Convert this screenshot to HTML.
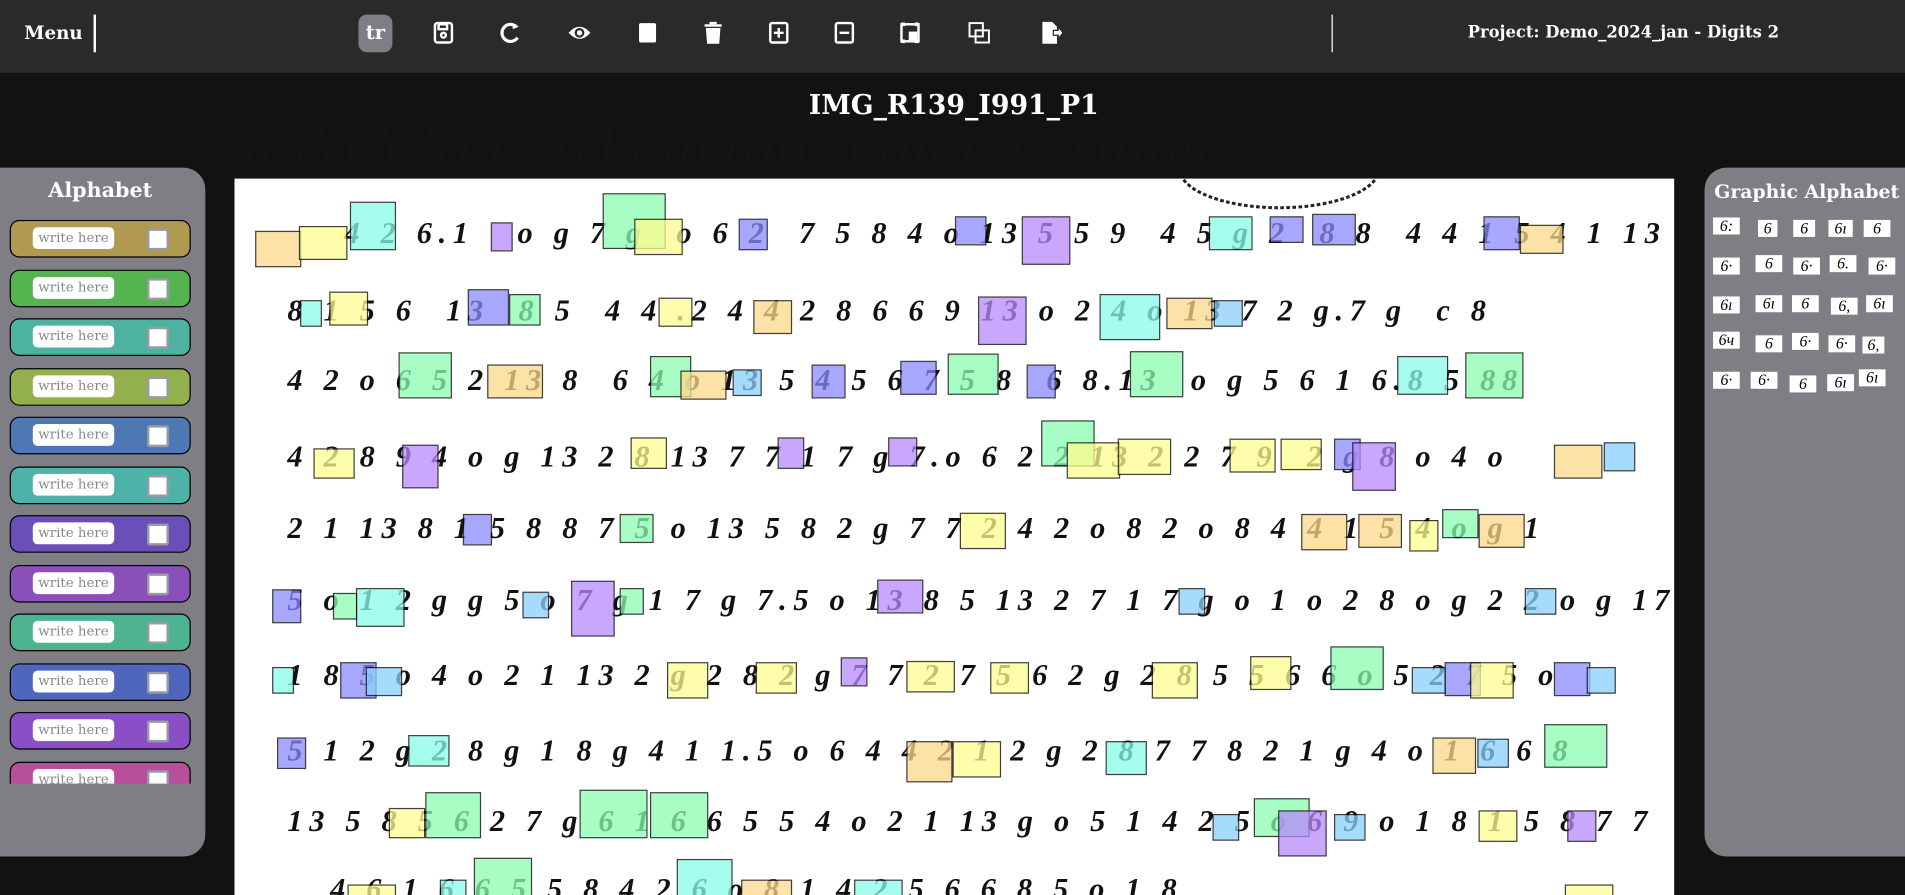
<!DOCTYPE html>
<html><head><meta charset="utf-8"><style>
html,body{margin:0;padding:0;width:1905px;height:891px;overflow:hidden;background:#121212;}
#w{position:absolute;left:0;top:0;width:1568px;height:734px;transform:scale(1.21492);transform-origin:0 0;font-family:"DejaVu Serif","Liberation Serif",serif;}
.top{position:absolute;left:0;top:0;width:1568px;height:60px;background:#2a2a2a;}
.t{position:absolute;color:#fff;font-weight:bold;white-space:nowrap;}
.ic{position:absolute;top:17px;width:20px;height:20px;}
.lp{position:absolute;left:0;top:138px;width:169px;height:567px;background:#7f7e84;border-radius:0 18px 18px 0;}
.rp{position:absolute;left:1403px;top:138px;width:165px;height:567px;background:#7f7e84;border-radius:18px 0 0 18px;overflow:hidden;}
.list{position:absolute;left:0;top:43px;width:169px;height:464px;overflow:hidden;}
.it{position:absolute;left:8px;width:147px;height:29px;border:1.5px solid #000;border-radius:8px;}
.it .in{position:absolute;left:18px;top:5px;width:67px;height:18px;background:#fff;border-radius:4px;color:#888;font-size:11px;line-height:18px;text-align:center;}
.it .cb{position:absolute;left:112px;top:6px;width:14px;height:14px;background:#fff;border:2px solid #9a9aa6;border-radius:2px;}
.img{position:absolute;left:193px;top:147px;width:1185px;height:590px;background:#fff;overflow:hidden;}
.b{position:absolute;border:1.5px solid #000;box-sizing:border-box;opacity:.75;}
.o{background:#fdd98a}.y{background:#fdfd90}.c{background:#8afde8}.p{background:#b88afd}.u{background:#8a8afd}.g{background:#8afdb0}.l{background:#8ad0fd}
.hw{position:absolute;left:20px;font-family:"Liberation Serif",serif;font-style:italic;font-weight:bold;font-size:25px;color:#111;white-space:pre;letter-spacing:5.5px;}
.th{position:absolute;width:22px;height:14px;background:#fff;font-family:"Liberation Serif",serif;font-style:italic;font-size:13px;line-height:14px;color:#000;text-align:center;}
</style></head><body><div id="w">
<div class="top">
<div class="t" style="left:20px;top:18px;font-size:15px;">Menu</div>
<div style="position:absolute;left:77px;top:12px;width:2px;height:31px;background:#fff"></div>
<div style="position:absolute;left:295px;top:12px;width:28px;height:31px;background:#7f7e84;border-radius:7px;color:#fff;font-weight:bold;font-size:16px;text-align:center;line-height:30px">tr</div>
<svg class="ic" style="left:355px" viewBox="0 0 20 20" fill="none" stroke="#fff" stroke-width="2"><rect x="3" y="2" width="14" height="16" rx="2"/><rect x="6" y="3" width="7" height="4"/><circle cx="10" cy="12" r="2"/></svg>
<svg class="ic" style="left:410px" viewBox="0 0 20 20" fill="none" stroke="#fff" stroke-width="2.6"><path d="M15 5A7 7 0 1 0 16 14"/><path d="M12 2l5 3-5 2z" fill="#fff" stroke="none"/></svg>
<svg class="ic" style="left:467px" viewBox="0 0 20 20"><path d="M1 10Q10 0 19 10Q10 20 1 10z" fill="#fff"/><circle cx="10" cy="10" r="4" fill="#2a2a2a"/><circle cx="10" cy="10" r="2.2" fill="#fff"/></svg>
<svg class="ic" style="left:523px" viewBox="0 0 20 20"><rect x="3" y="2" width="14" height="16" rx="1.5" fill="#fff"/></svg>
<svg class="ic" style="left:577px" viewBox="0 0 20 20" fill="#fff"><rect x="3" y="3" width="14" height="2"/><rect x="7" y="1" width="6" height="2"/><path d="M4 6h12l-1 13H5z"/></svg>
<svg class="ic" style="left:631px" viewBox="0 0 20 20" fill="none" stroke="#fff" stroke-width="2"><rect x="3" y="2" width="14" height="16" rx="1.5"/><path d="M10 6v8M6 10h8"/></svg>
<svg class="ic" style="left:685px" viewBox="0 0 20 20" fill="none" stroke="#fff" stroke-width="2"><rect x="3" y="2" width="14" height="16" rx="1.5"/><path d="M6 10h8"/></svg>
<svg class="ic" style="left:739px" viewBox="0 0 20 20" fill="none" stroke="#fff" stroke-width="2"><rect x="3" y="3" width="14" height="14"/><rect x="10" y="10" width="5" height="5" fill="#fff"/><path d="M3 3h3M14 3h3M3 17h3M14 17h3" stroke-width="3"/></svg>
<svg class="ic" style="left:796px" viewBox="0 0 20 20" fill="none" stroke="#fff" stroke-width="1.6"><rect x="2" y="2" width="11" height="11"/><rect x="7" y="8" width="11" height="10"/></svg>
<svg class="ic" style="left:855px" viewBox="0 0 20 20" fill="#fff"><path d="M3 1h8l4 4v14H3z"/><path d="M12 8h4V5l4 5-4 5v-3h-4z" stroke="#2a2a2a" stroke-width="1"/></svg>
<div style="position:absolute;left:1096px;top:12px;width:1px;height:31px;background:#fff"></div>
<div class="t" style="left:1208px;top:19px;font-size:13.5px;">Project: Demo_2024_jan - Digits 2</div>
</div>
<div style="position:absolute;left:200px;top:90px;font-family:'Liberation Serif',serif;font-style:italic;font-size:50px;color:#141414;white-space:nowrap;letter-spacing:3px">nnVeVXbozirkenrio62vinetsvvraum</div>
<div class="t" style="left:0;width:1570px;text-align:center;top:74px;font-size:22px;">IMG_R139_I991_P1</div>

<div class="lp"><div class="t" style="left:0;width:165px;text-align:center;top:9px;font-size:17px">Alphabet</div>
<div class="list">
<div class="it" style="top:0;background:#b09a50"><div class="in">write here</div><div class="cb"></div></div>
<div class="it" style="top:40.5px;background:#56b450"><div class="in">write here</div><div class="cb"></div></div>
<div class="it" style="top:81px;background:#4db3a0"><div class="in">write here</div><div class="cb"></div></div>
<div class="it" style="top:121.5px;background:#93b04e"><div class="in">write here</div><div class="cb"></div></div>
<div class="it" style="top:162px;background:#4e78b4"><div class="in">write here</div><div class="cb"></div></div>
<div class="it" style="top:202.5px;background:#4db3a8"><div class="in">write here</div><div class="cb"></div></div>
<div class="it" style="top:243px;background:#6a4fb8"><div class="in">write here</div><div class="cb"></div></div>
<div class="it" style="top:283.5px;background:#8a4fb8"><div class="in">write here</div><div class="cb"></div></div>
<div class="it" style="top:324px;background:#4db390"><div class="in">write here</div><div class="cb"></div></div>
<div class="it" style="top:364.5px;background:#4e66bc"><div class="in">write here</div><div class="cb"></div></div>
<div class="it" style="top:405px;background:#8a4fc4"><div class="in">write here</div><div class="cb"></div></div>
<div class="it" style="top:445.5px;background:#b84f9a"><div class="in">write here</div><div class="cb"></div></div>
</div></div>

<div class="rp"><div class="t" style="left:8px;top:10px;font-size:15.5px">Graphic Alphabet</div>
<div class="th" style="left:7px;top:41px">6:</div><div class="th" style="left:44px;top:43px;width:16px">6</div><div class="th" style="left:73px;top:43px;width:18px">6</div><div class="th" style="left:102px;top:43px;width:20px">6ı</div><div class="th" style="left:131px;top:43px;width:22px">6</div>
<div class="th" style="left:7px;top:74px">6·</div><div class="th" style="left:42px;top:72px">6</div><div class="th" style="left:73px;top:74px">6·</div><div class="th" style="left:103px;top:72px">6.</div><div class="th" style="left:135px;top:74px">6·</div>
<div class="th" style="left:7px;top:106px">6ı</div><div class="th" style="left:42px;top:105px">6ı</div><div class="th" style="left:72px;top:105px">6</div><div class="th" style="left:104px;top:107px">6,</div><div class="th" style="left:133px;top:105px">6ı</div>
<div class="th" style="left:7px;top:135px">6ч</div><div class="th" style="left:42px;top:138px">6</div><div class="th" style="left:72px;top:136px">6·</div><div class="th" style="left:102px;top:138px">6·</div><div class="th" style="left:130px;top:139px;width:18px">6,</div>
<div class="th" style="left:7px;top:168px">6·</div><div class="th" style="left:38px;top:168px">6·</div><div class="th" style="left:70px;top:171px">6</div><div class="th" style="left:101px;top:170px">6ı</div><div class="th" style="left:127px;top:166px">6ı</div>
</div>

<div class="img">
<svg style="position:absolute;left:775px;top:-20px" width="170" height="50"><ellipse cx="85" cy="12" rx="82" ry="32" fill="none" stroke="#222" stroke-width="2.5" stroke-dasharray="3 2"/><text x="62" y="20" font-size="9" fill="#222" font-family="Liberation Sans">OL. VATICANVM</text></svg>
<div class="hw" style="top:32px">      4 2 6.1   o g 7 g  o 6 2  7 5 8 4 o 13 5 5 9  4 5 g 2  8 8  4 4 1 5 4 1 13 o</div>
<div class="hw" style="top:96px">  8 1 5 6  13  8 5  4 4 .2 4 4 2 8 6 6 9 13 o 2 4 o 13 7 2 g.7 g  c 8</div>
<div class="hw" style="top:153px">  4 2 o 6 5 2 13 8  6 4 o 13 5 4 5 6 7 5 8  6 8.13  o g 5 6 1 6.8 5 88</div>
<div class="hw" style="top:216px">  4 2 8 9 4 o g 13 2 8 13 7 7 1 7 g 7.o 6 2 2 13 2 2 7 9  2 g 8 o 4 o</div>
<div class="hw" style="top:275px">  2 1 13 8 1 5 8 8 7 5 o 13 5 8 2 g 7 7 2 4 2 o 8 2 o 8 4 4 1 5 4 o g 1</div>
<div class="hw" style="top:334px">  5 o 1 2 g g 5 o 7 g 1 7 g 7.5 o 13 8 5 13 2 7 1 7 g o 1 o 2 8 o g 2 2 o g 17</div>
<div class="hw" style="top:396px">  1 8 5 o 4 o 2 1 13 2 g 2 8 2 g 7 7 2 7 5 6 2 g 2 8 5 5 6 6 o 5 2 7 5 o</div>
<div class="hw" style="top:458px">  5 1 2 g 2 8 g 1 8 g 4 1 1.5 o 6 4 4 2 1 2 g 2 8 7 7 8 2 1 g 4 o 1 6 6 8</div>
<div class="hw" style="top:516px">  13 5 8 5 6 2 7 g 6 1 6 6 5 5 4 o 2 1 13 g o 5 1 4 2 5 o 6 9 o 1 8 1 5 8 7 7</div>
<div class="hw" style="top:572px">     4 6 1 6 6 5 5 8 4 2 6 o 8 1 4 2 5 6 6 8 5 o 1 8</div>
<div class="b o" style="left:17px;top:43px;width:38px;height:30px"></div>
<div class="b y" style="left:53px;top:39px;width:40px;height:28px"></div>
<div class="b c" style="left:95px;top:19px;width:38px;height:40px"></div>
<div class="b p" style="left:211px;top:36px;width:18px;height:24px"></div>
<div class="b g" style="left:303px;top:12px;width:52px;height:46px"></div>
<div class="b y" style="left:329px;top:33px;width:40px;height:30px"></div>
<div class="b u" style="left:415px;top:33px;width:24px;height:26px"></div>
<div class="b u" style="left:593px;top:31px;width:26px;height:24px"></div>
<div class="b p" style="left:648px;top:31px;width:40px;height:40px"></div>
<div class="b c" style="left:802px;top:31px;width:36px;height:28px"></div>
<div class="b u" style="left:852px;top:31px;width:28px;height:22px"></div>
<div class="b u" style="left:887px;top:29px;width:36px;height:26px"></div>
<div class="b u" style="left:1028px;top:31px;width:30px;height:28px"></div>
<div class="b o" style="left:1058px;top:38px;width:36px;height:24px"></div>
<div class="b c" style="left:54px;top:100px;width:18px;height:22px"></div>
<div class="b y" style="left:78px;top:93px;width:32px;height:28px"></div>
<div class="b u" style="left:192px;top:91px;width:34px;height:30px"></div>
<div class="b g" style="left:226px;top:95px;width:26px;height:26px"></div>
<div class="b y" style="left:349px;top:98px;width:28px;height:24px"></div>
<div class="b o" style="left:427px;top:100px;width:32px;height:28px"></div>
<div class="b p" style="left:612px;top:97px;width:40px;height:40px"></div>
<div class="b c" style="left:712px;top:95px;width:50px;height:38px"></div>
<div class="b o" style="left:767px;top:98px;width:38px;height:26px"></div>
<div class="b l" style="left:806px;top:100px;width:24px;height:22px"></div>
<div class="b g" style="left:135px;top:143px;width:44px;height:38px"></div>
<div class="b o" style="left:208px;top:153px;width:46px;height:28px"></div>
<div class="b g" style="left:342px;top:146px;width:34px;height:34px"></div>
<div class="b o" style="left:367px;top:158px;width:38px;height:24px"></div>
<div class="b l" style="left:410px;top:157px;width:24px;height:22px"></div>
<div class="b u" style="left:475px;top:153px;width:28px;height:28px"></div>
<div class="b u" style="left:548px;top:150px;width:30px;height:28px"></div>
<div class="b g" style="left:587px;top:144px;width:42px;height:34px"></div>
<div class="b u" style="left:652px;top:153px;width:24px;height:28px"></div>
<div class="b g" style="left:737px;top:142px;width:44px;height:38px"></div>
<div class="b c" style="left:957px;top:146px;width:42px;height:32px"></div>
<div class="b g" style="left:1013px;top:143px;width:48px;height:38px"></div>
<div class="b y" style="left:65px;top:222px;width:34px;height:25px"></div>
<div class="b p" style="left:138px;top:219px;width:30px;height:36px"></div>
<div class="b y" style="left:326px;top:213px;width:30px;height:26px"></div>
<div class="b p" style="left:447px;top:213px;width:22px;height:26px"></div>
<div class="b p" style="left:538px;top:213px;width:24px;height:24px"></div>
<div class="b g" style="left:664px;top:199px;width:44px;height:38px"></div>
<div class="b y" style="left:685px;top:217px;width:44px;height:30px"></div>
<div class="b y" style="left:727px;top:214px;width:44px;height:30px"></div>
<div class="b y" style="left:819px;top:214px;width:38px;height:28px"></div>
<div class="b y" style="left:861px;top:214px;width:34px;height:26px"></div>
<div class="b u" style="left:905px;top:214px;width:22px;height:26px"></div>
<div class="b p" style="left:920px;top:217px;width:36px;height:40px"></div>
<div class="b o" style="left:1086px;top:219px;width:40px;height:28px"></div>
<div class="b l" style="left:1127px;top:217px;width:26px;height:24px"></div>
<div class="b u" style="left:188px;top:276px;width:24px;height:26px"></div>
<div class="b g" style="left:317px;top:276px;width:28px;height:24px"></div>
<div class="b y" style="left:597px;top:275px;width:38px;height:30px"></div>
<div class="b o" style="left:878px;top:276px;width:38px;height:30px"></div>
<div class="b o" style="left:925px;top:276px;width:36px;height:28px"></div>
<div class="b y" style="left:967px;top:281px;width:24px;height:26px"></div>
<div class="b g" style="left:994px;top:272px;width:30px;height:24px"></div>
<div class="b o" style="left:1024px;top:276px;width:38px;height:28px"></div>
<div class="b u" style="left:31px;top:338px;width:24px;height:28px"></div>
<div class="b g" style="left:81px;top:341px;width:20px;height:22px"></div>
<div class="b c" style="left:100px;top:337px;width:40px;height:32px"></div>
<div class="b l" style="left:237px;top:340px;width:22px;height:22px"></div>
<div class="b p" style="left:277px;top:331px;width:36px;height:46px"></div>
<div class="b g" style="left:317px;top:337px;width:20px;height:22px"></div>
<div class="b p" style="left:529px;top:330px;width:38px;height:28px"></div>
<div class="b l" style="left:777px;top:337px;width:22px;height:22px"></div>
<div class="b l" style="left:1062px;top:337px;width:26px;height:22px"></div>
<div class="b c" style="left:31px;top:402px;width:18px;height:22px"></div>
<div class="b u" style="left:87px;top:398px;width:30px;height:30px"></div>
<div class="b l" style="left:108px;top:402px;width:30px;height:24px"></div>
<div class="b y" style="left:356px;top:398px;width:34px;height:30px"></div>
<div class="b y" style="left:429px;top:398px;width:34px;height:26px"></div>
<div class="b p" style="left:499px;top:394px;width:22px;height:24px"></div>
<div class="b y" style="left:553px;top:397px;width:40px;height:26px"></div>
<div class="b y" style="left:622px;top:398px;width:32px;height:26px"></div>
<div class="b y" style="left:755px;top:398px;width:38px;height:30px"></div>
<div class="b y" style="left:836px;top:393px;width:34px;height:28px"></div>
<div class="b g" style="left:902px;top:385px;width:44px;height:36px"></div>
<div class="b l" style="left:969px;top:402px;width:28px;height:22px"></div>
<div class="b u" style="left:996px;top:398px;width:30px;height:28px"></div>
<div class="b y" style="left:1017px;top:398px;width:36px;height:30px"></div>
<div class="b u" style="left:1086px;top:398px;width:30px;height:28px"></div>
<div class="b l" style="left:1113px;top:402px;width:24px;height:22px"></div>
<div class="b u" style="left:35px;top:460px;width:24px;height:26px"></div>
<div class="b c" style="left:143px;top:458px;width:34px;height:26px"></div>
<div class="b o" style="left:553px;top:463px;width:38px;height:34px"></div>
<div class="b y" style="left:591px;top:463px;width:40px;height:30px"></div>
<div class="b c" style="left:717px;top:463px;width:34px;height:28px"></div>
<div class="b o" style="left:986px;top:460px;width:36px;height:30px"></div>
<div class="b l" style="left:1023px;top:461px;width:26px;height:24px"></div>
<div class="b g" style="left:1078px;top:449px;width:52px;height:36px"></div>
<div class="b y" style="left:127px;top:518px;width:30px;height:25px"></div>
<div class="b g" style="left:157px;top:505px;width:46px;height:38px"></div>
<div class="b g" style="left:284px;top:503px;width:56px;height:40px"></div>
<div class="b g" style="left:342px;top:505px;width:48px;height:38px"></div>
<div class="b l" style="left:805px;top:523px;width:22px;height:22px"></div>
<div class="b g" style="left:839px;top:510px;width:46px;height:32px"></div>
<div class="b p" style="left:859px;top:520px;width:40px;height:38px"></div>
<div class="b l" style="left:905px;top:523px;width:26px;height:22px"></div>
<div class="b y" style="left:1024px;top:520px;width:32px;height:26px"></div>
<div class="b p" style="left:1097px;top:520px;width:24px;height:26px"></div>
<div class="b y" style="left:93px;top:581px;width:40px;height:20px"></div>
<div class="b c" style="left:169px;top:577px;width:22px;height:20px"></div>
<div class="b g" style="left:197px;top:559px;width:48px;height:40px"></div>
<div class="b c" style="left:364px;top:560px;width:46px;height:40px"></div>
<div class="b o" style="left:417px;top:577px;width:42px;height:20px"></div>
<div class="b c" style="left:510px;top:577px;width:40px;height:20px"></div>
<div class="b y" style="left:1095px;top:581px;width:40px;height:20px"></div>
</div>
</div></body></html>
